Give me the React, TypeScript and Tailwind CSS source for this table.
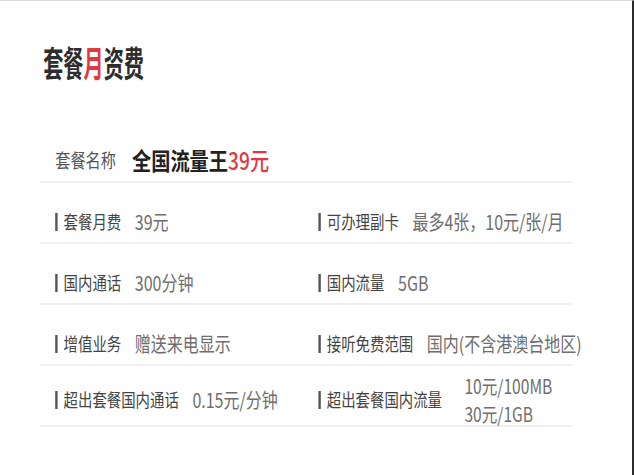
import React from 'react';

type Item = { label: string; value: string[] };

const rows: [Item, Item][] = [
  [
    { label: '套餐月费', value: ['39元'] },
    { label: '可办理副卡', value: ['最多4张，10元/张/月'] },
  ],
  [
    { label: '国内通话', value: ['300分钟'] },
    { label: '国内流量', value: ['5GB'] },
  ],
  [
    { label: '增值业务', value: ['赠送来电显示'] },
    { label: '接听免费范围', value: ['国内(不含港澳台地区)'] },
  ],
  [
    { label: '超出套餐国内通话', value: ['0.15元/分钟'] },
    { label: '超出套餐国内流量', value: ['10元/100MB', '30元/1GB'] },
  ],
];

function Cell({ item }: { item: Item }) {
  const multi = item.value.length > 1;
  return (
    <div className="flex items-center">
      <span className="shrink-0 w-[2.5px] h-[18px] bg-[#555] mr-[8px]" />
      <span className="text-[#444] whitespace-nowrap">{item.label}</span>
      <div
        className={`${
          multi ? 'ml-[28px] text-[19.5px] leading-[28px]' : 'ml-[17px] text-[20px] leading-[25px]'
        } text-[#6e6e6e] whitespace-nowrap`}
      >
        {item.value.map((v) => (
          <div key={v}>{v}</div>
        ))}
      </div>
    </div>
  );
}

function App() {
  return (
    <div className="w-[634px] h-[475px] overflow-hidden bg-white border-t border-[#d9d9d9] border-r-2 border-r-[#2b2b2b] font-['Noto_Sans_CJK_SC',sans-serif]">
      <div className="w-[792px] origin-top-left scale-x-[0.8]">
        <div className="pt-[41px] pl-[54px] h-[84px]">
          <h1 className="inline-block origin-left scale-x-[0.72] text-[35px] leading-[40px] font-bold text-[#2e2e2e] whitespace-nowrap">
            套餐<span className="text-[#e0393e]">月</span>资费
          </h1>
        </div>

        <div className="ml-[50px] w-[666px] mt-[54px]">
          <div className="h-[44px] flex items-center pl-[19px] border-b-2 border-[#f0f0f0]">
            <span className="text-[19px] text-[#555]">套餐名称</span>
            <span className="ml-[20px] text-[24px] font-bold text-[#222]">
              全国流量王<span className="text-[#e0393e] font-medium">39元</span>
            </span>
          </div>

          {rows.map(([left, right], i) => (
            <div
              key={i}
              className={`h-[61px] flex items-center pl-[19px] text-[18px] border-b-2 border-[#f0f0f0] ${
                i === rows.length - 1 ? 'pt-[8px]' : 'pt-[18px]'
              }`}
            >
              <div className="w-[329px] shrink-0">
                <Cell item={left} />
              </div>
              <div className="flex-1 min-w-0">
                <Cell item={right} />
              </div>
            </div>
          ))}
        </div>
      </div>
    </div>
  );
}

export default App;
